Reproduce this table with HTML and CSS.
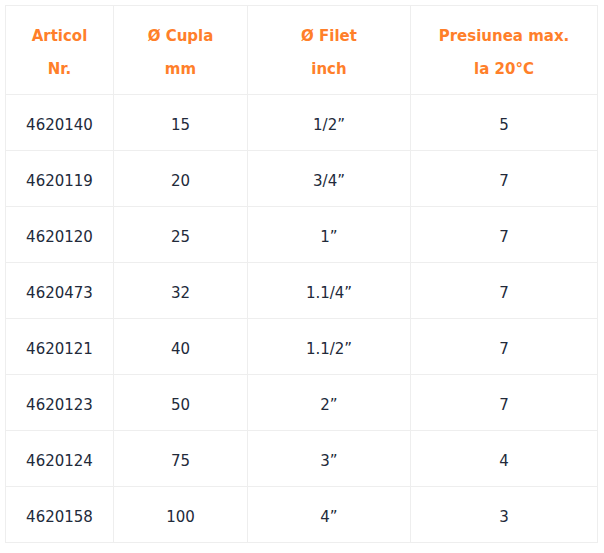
FILE: index.html
```html
<!DOCTYPE html>
<html>
<head>
<meta charset="utf-8">
<link rel="stylesheet" href="styles.css">
</head>
<body>
<table class="specs">
  <colgroup>
    <col class="c1"><col class="c2"><col class="c3"><col class="c4">
  </colgroup>
  <thead>
    <tr>
      <th>Articol<br>Nr.</th>
      <th>Ø Cupla<br>mm</th>
      <th>Ø Filet<br>inch</th>
      <th>Presiunea max.<br>la 20°C</th>
    </tr>
  </thead>
  <tbody>
    <tr><td>4620140</td><td>15</td><td>1/2”</td><td>5</td></tr>
    <tr><td>4620119</td><td>20</td><td>3/4”</td><td>7</td></tr>
    <tr><td>4620120</td><td>25</td><td>1”</td><td>7</td></tr>
    <tr><td>4620473</td><td>32</td><td>1.1/4”</td><td>7</td></tr>
    <tr><td>4620121</td><td>40</td><td>1.1/2”</td><td>7</td></tr>
    <tr><td>4620123</td><td>50</td><td>2”</td><td>7</td></tr>
    <tr><td>4620124</td><td>75</td><td>3”</td><td>4</td></tr>
    <tr><td>4620158</td><td>100</td><td>4”</td><td>3</td></tr>
  </tbody>
</table>
</body>
</html>
```
FILE: styles.css
```css
html, body {
  margin: 0;
  padding: 0;
  background: #ffffff;
}
body {
  padding: 5px 7px 0 5px;
  font-family: "DejaVu Sans", "Open Sans", sans-serif;
  font-size: 15px;
  color: #222a3a;
}
.specs {
  border-collapse: collapse;
  width: 592px;
  table-layout: fixed;
}
.c1 { width: 108px; }
.c2 { width: 134px; }
.c3 { width: 163px; }
.c4 { width: 187px; }
.specs th,
.specs td {
  border: 1px solid #eeeeee;
  padding: 14px 4px 8px;
  line-height: 33px;
  text-align: center;
  vertical-align: middle;
}
.specs th {
  color: #ff7f2a;
  font-weight: 700;
}
```
